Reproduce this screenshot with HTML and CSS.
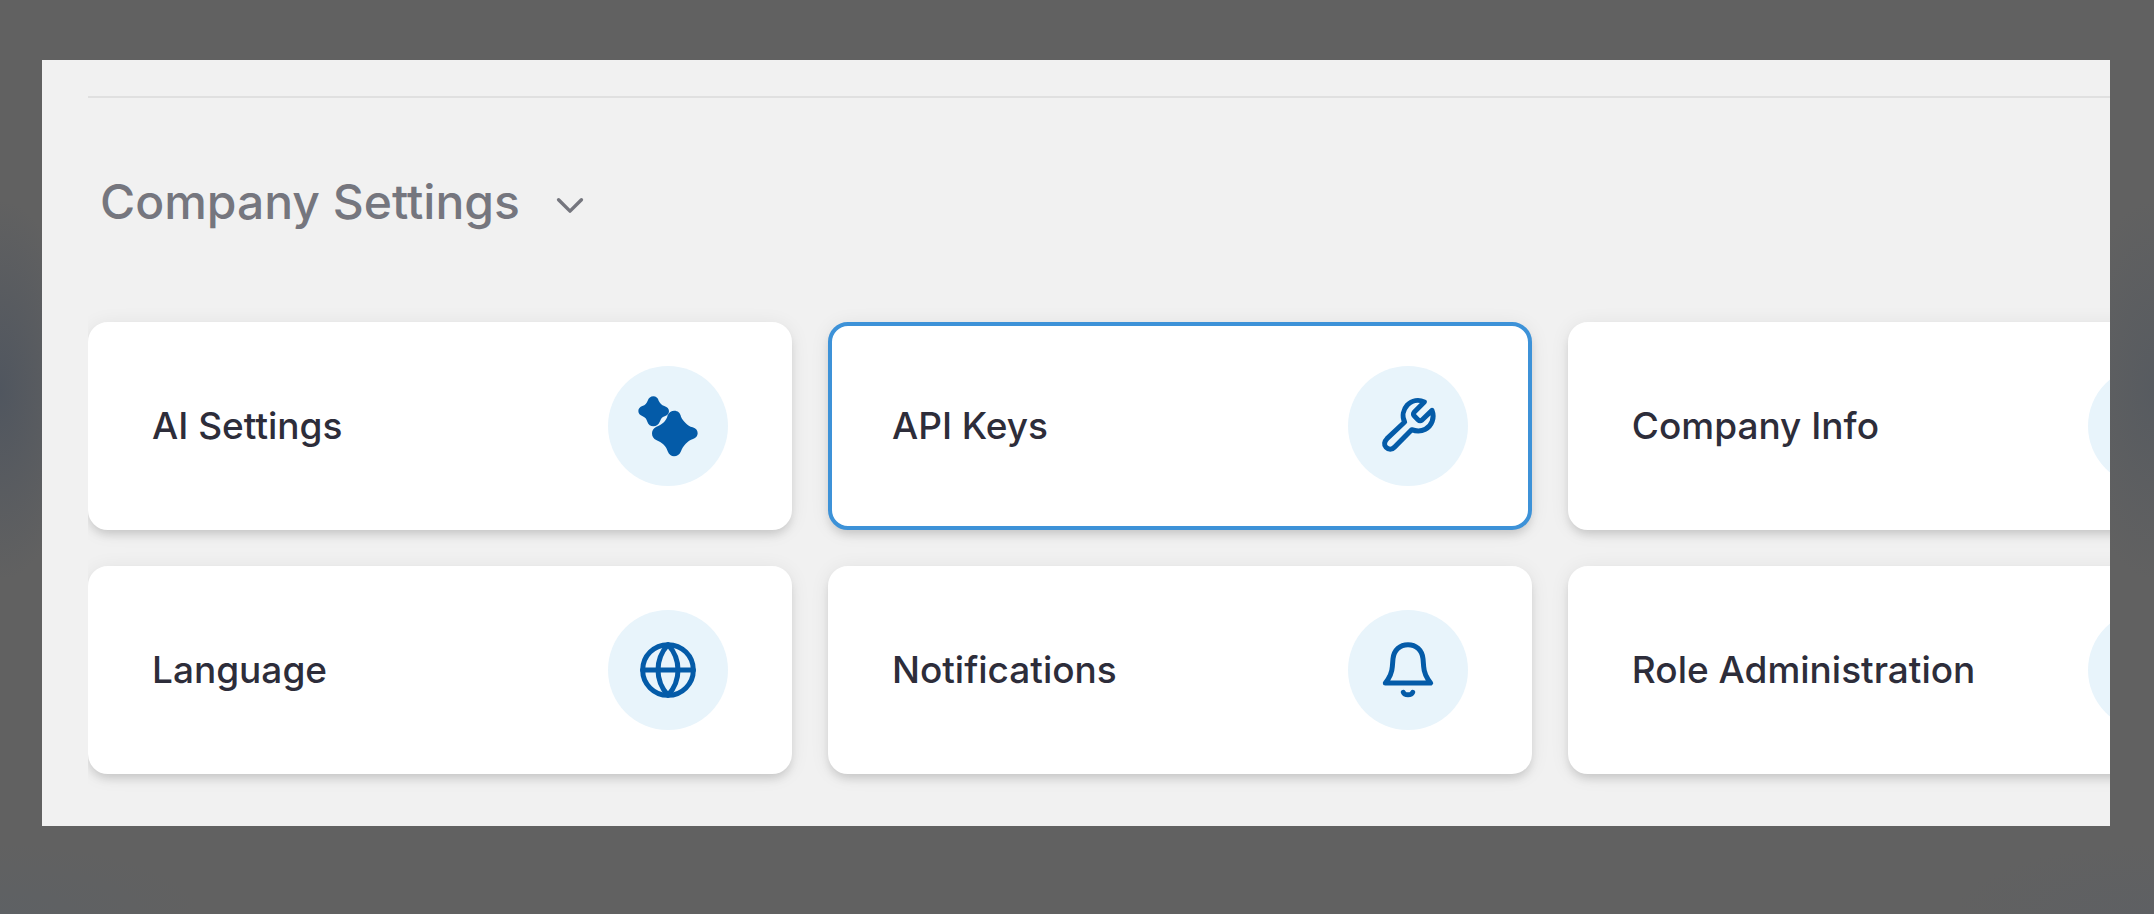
FILE: index.html
```html
<!DOCTYPE html>
<html lang="en">
<head>
  <meta charset="UTF-8" />
  <meta name="viewport" content="width=device-width, initial-scale=1" />
  <title>Company Settings</title>
  <link rel="stylesheet" href="styles.css">
</head>
<body>

  <main class="panel">
    <hr class="divider" />

    <h2 class="section-title">
      <button type="button" class="section-toggle" aria-expanded="true">
        Company Settings
        <svg class="chevron" viewBox="0 0 28 28" aria-hidden="true"><path d="M4 12l10 10L24 12" /></svg>
      </button>
    </h2>

    <div class="cards-wrap">
      <nav class="cards">
        <a class="card" href="#ai">
          <span class="card-name">AI Settings</span>
          <span class="card-icon">
            <svg class="solid" viewBox="0 0 180 180" aria-hidden="true">
              <path d="M46 1C54 1 60 6 62 14C66 22 71 27 79 30C88 33 93 38 93 46C93 54 87 58 80 61C72 63 69 68 66 76C62 86 55 91 46 91C38 91 31 86 28 77C25 69 22 64 14 61C6 57 1 53 1 45C1 38 6 33 13 30C22 27 26 22 29 14C32 6 38 1 46 1Z" />
              <path d="M109 44C119 44 127 50 129 62C135 75 148 89 164 94C174 97 179 104 179 112C179 120 174 126 165 129C149 134 135 149 129 166C125 176 117 181 108 181C100 181 93 176 89 166C85 151 73 140 56 133C46 128 42 122 42 112C42 104 46 97 54 93C72 86 85 76 89 58C92 49 100 44 109 44Z" />
            </svg>
          </span>
        </a>

        <a class="card active" href="#api" aria-current="page">
          <span class="card-name">API Keys</span>
          <span class="card-icon">
            <svg viewBox="0 0 180 180" aria-hidden="true">
              <path d="M139 18L109 48Q104 54 109 60L120 71Q126 77 132 72L162 43C171 66 161 90 142 100C128 107 114 106 101 101L50 153C42 162 31 161 24 154C17 147 19 136 27 128L80 78C71 60 76 40 88 27C102 13 122 10 139 18Z" />
            </svg>
          </span>
        </a>

        <a class="card" href="#info">
          <span class="card-name">Company Info</span>
          <span class="card-icon"></span>
        </a>

        <a class="card" href="#language">
          <span class="card-name">Language</span>
          <span class="card-icon">
            <svg viewBox="0 0 180 180" aria-hidden="true">
              <circle cx="90" cy="90" r="76" />
              <path d="M90 14C50 58 50 122 90 166C130 122 130 58 90 14ZM14 90H166" />
            </svg>
          </span>
        </a>

        <a class="card" href="#notifications">
          <span class="card-name">Notifications</span>
          <span class="card-icon">
            <svg viewBox="0 0 180 180" aria-hidden="true">
              <path d="M22 129C36 112 42 98 43 80L45 56C48 30 66 14 90 14C114 14 132 30 135 56L137 80C138 98 144 112 158 129Z" />
              <path d="M76 157C80 167 100 167 104 157" />
            </svg>
          </span>
        </a>

        <a class="card" href="#roles">
          <span class="card-name">Role Administration</span>
          <span class="card-icon"></span>
        </a>
      </nav>
    </div>
  </main>

</body>
</html>
```

FILE: styles.css
```css
body {
  margin: 0;
  padding: 60px 44px 88px 42px;
  min-height: 100vh;
  box-sizing: border-box;
  font-family: Inter, "Open Sans", sans-serif;
  background-color: #616161;
  background-image:
    radial-gradient(ellipse 80px 190px at 0 390px, #50565f, transparent),
    radial-gradient(ellipse 80px 190px at 100% 390px, #575b60, transparent),
    radial-gradient(ellipse 200px 70px at 0 100%, #5e6164, transparent),
    radial-gradient(ellipse 200px 70px at 100% 100%, #5e6063, transparent);
}

.panel {
  padding: 36px 0 28px 46px;
  background-color: #f1f1f1;
  overflow: hidden;
}

.divider {
  height: 2px;
  margin: 0;
  border: none;
  background-color: #e0e0e0;
}

.section-title {
  margin: 76px 0 68px;
  padding-left: 12px;
  line-height: 56px;
}

.section-toggle {
  display: flex;
  align-items: center;
  gap: 34px;
  padding: 0;
  border: none;
  background: none;
  color: #75767e;
  font-family: inherit;
  font-size: 48px;
  font-weight: 500;
  line-height: 56px;
  cursor: pointer;
}

.chevron {
  width: 32px;
  height: 32px;
  fill: none;
  stroke: #75767e;
  stroke-width: 3;
  stroke-linecap: round;
  stroke-linejoin: round;
}

/* cuts the third column and the card shadows at the panel edge */
.cards-wrap {
  padding: 24px 0;
  overflow: hidden;
}

.cards {
  display: grid;
  grid-template-columns: repeat(3, 1fr);
  gap: 36px;
  width: 108%;
}

.card {
  display: flex;
  align-items: center;
  justify-content: space-between;
  padding: 40px 60px;
  border: 4px solid #fff;
  border-radius: 20px;
  background-color: #fff;
  box-shadow: 0 6px 10px -2px rgba(0, 0, 0, 0.14), 0 2px 20px rgba(0, 0, 0, 0.07);
  color: #2d2d3a;
  text-decoration: none;
}

.card.active {
  border-color: #3d92d8;
}

.card-name {
  font-size: 37px;
  font-weight: 500;
  line-height: 44px;
  white-space: nowrap;
}

.card-icon {
  display: flex;
  flex-shrink: 0;
  align-items: center;
  justify-content: center;
  width: 120px;
  height: 120px;
  border-radius: 50%;
  background-color: #e8f4fb;
}

.card-icon svg {
  width: 60px;
  height: 60px;
  overflow: visible;
  fill: none;
  stroke: #045ba8;
  stroke-width: 15;
  stroke-linecap: round;
  stroke-linejoin: round;
}

.card-icon svg.solid {
  fill: #045ba8;
  stroke: none;
}
```
